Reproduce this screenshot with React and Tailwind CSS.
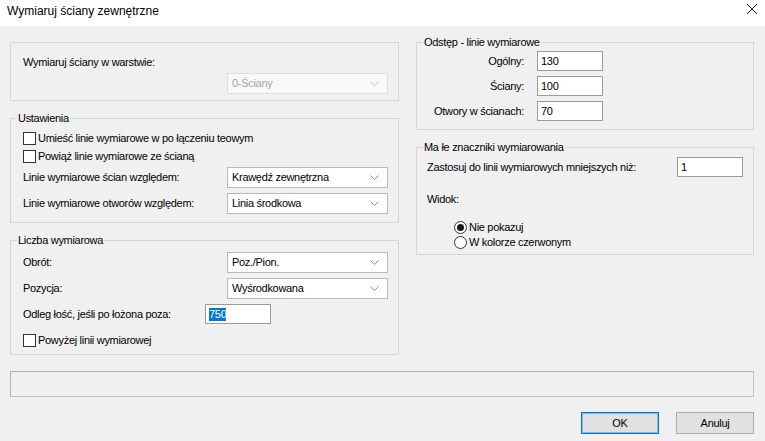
import React from 'react';

const font = { fontFamily: '"Liberation Sans", Arial, sans-serif' };

// chevron used in every combo box
const Chevron = ({ disabled }) => (
  <svg width="9" height="5" viewBox="0 0 9 5" className="shrink-0">
    <path d="M0.5 0.5 L4.5 4.5 L8.5 0.5" fill="none" stroke={disabled ? '#c4c4c4' : '#8a8a8a'} strokeWidth="1" />
  </svg>
);

const Combo = ({ value, disabled }) => (
  <div
    className={
      'w-[161px] h-[21px] flex items-center justify-between pl-[4px] pr-[8px] border ' +
      (disabled ? 'bg-[#f9f9f9] border-[#dedede] text-[#a3a3a3]' : 'bg-white border-[#b9b9b9] text-black')
    }
  >
    <span>{value}</span>
    <Chevron disabled={disabled} />
  </div>
);

const Input = ({ value, selected }) => (
  <div className="w-[66px] h-[20px] bg-white border border-[#9c9c9c] flex items-center pl-[3px]">
    {selected ? <span className="bg-[#0078d7] text-white leading-[13px]">{value}</span> : <span>{value}</span>}
  </div>
);

const Check = ({ label }) => (
  <div className="h-[15px] flex items-center">
    <div className="w-[13px] h-[13px] bg-white border border-[#333]" />
    <span className="ml-[2px]">{label}</span>
  </div>
);

const Radio = ({ label, checked }) => (
  <div className="h-[15px] flex items-center">
    <div className="w-[13px] h-[13px] rounded-full bg-white border border-[#333] flex items-center justify-center">
      {checked && <div className="w-[7px] h-[7px] rounded-full bg-[#1a1a1a]" />}
    </div>
    <span className="ml-[2px]">{label}</span>
  </div>
);

const Group = ({ title, className, children }) => (
  <div className={'relative border border-[#d5d5d5] ' + className}>
    {title && (
      <span className="absolute -top-[7px] left-[6px] px-[1px] bg-[#f0f0f0] leading-[13px]">{title}</span>
    )}
    {children}
  </div>
);

export default function App() {
  return (
    <div className="w-[765px] h-[441px] bg-[#f0f0f0] text-[11px] tracking-[-0.3px] text-black overflow-hidden" style={font}>
      {/* title bar */}
      <div className="h-[26px] bg-white flex items-center justify-between pl-[7px] pr-[7px]">
        <span className="text-[12px] tracking-normal leading-[16px] -mt-[5px]">Wymiaruj ściany zewnętrzne</span>
        <svg width="12" height="12" viewBox="0 0 12 12" className="-mt-[8px]">
          <path d="M1 1 L11 11 M11 1 L1 11" stroke="#222" strokeWidth="1" />
        </svg>
      </div>

      <div className="pl-[10px] pr-[11px] pt-[16px]">
        <div className="flex gap-[17px]">
          {/* left column */}
          <div className="w-[389px] flex flex-col">
            <Group className="h-[59px] pl-[12px] pt-[13px]">
              <div className="leading-[13px]">Wymiaruj ściany w warstwie:</div>
              <div className="mt-[4px] ml-[204px]">
                <Combo value="0-Ściany" disabled />
              </div>
            </Group>

            <Group title="Ustawienia" className="mt-[17px] h-[105px] pl-[12px] pt-[12px]">
              <Check label="Umieść linie wymiarowe w po łączeniu teowym" />
              <div className="mt-[3px]">
                <Check label="Powiąż linie wymiarowe ze ścianą" />
              </div>
              <div className="mt-[3px] flex items-center">
                <span className="w-[204px]">Linie wymiarowe ścian względem:</span>
                <Combo value="Krawędź zewnętrzna" />
              </div>
              <div className="mt-[5px] flex items-center">
                <span className="w-[204px]">Linie wymiarowe otworów względem:</span>
                <Combo value="Linia środkowa" />
              </div>
            </Group>

            <Group title="Liczba wymiarowa" className="mt-[17px] h-[115px] pl-[12px] pt-[11px]">
              <div className="flex items-center">
                <span className="w-[204px]">Obrót:</span>
                <Combo value="Poz./Pion." />
              </div>
              <div className="mt-[5px] flex items-center">
                <span className="w-[204px]">Pozycja:</span>
                <Combo value="Wyśrodkowana" />
              </div>
              <div className="mt-[5px] flex items-center">
                <span className="w-[182px]">Odleg łość, jeśli po łożona poza:</span>
                <Input value="750" selected />
              </div>
              <div className="mt-[9px]">
                <Check label="Powyżej linii wymiarowej" />
              </div>
            </Group>
          </div>

          {/* right column */}
          <div className="w-[338px] flex flex-col">
            <Group title="Odstęp - linie wymiarowe" className="h-[88px] pt-[8px] flex flex-col gap-[5px]">
              {[
                ['Ogólny:', '130'],
                ['Ściany:', '100'],
                ['Otwory w ścianach:', '70'],
              ].map(([label, value]) => (
                <div key={label} className="flex items-center">
                  <span className="w-[107px] text-right">{label}</span>
                  <div className="ml-[13px]">
                    <Input value={value} />
                  </div>
                </div>
              ))}
            </Group>

            <Group title="Ma łe znaczniki wymiarowania" className="mt-[17px] h-[108px] pt-[9px] pl-[10px] pr-[10px]">
              <div className="flex items-center justify-between">
                <span>Zastosuj do linii wymiarowych mniejszych niż:</span>
                <Input value="1" />
              </div>
              <div className="mt-[16px] leading-[13px]">Widok:</div>
              <div className="mt-[14px] pl-[27px]">
                <Radio label="Nie pokazuj" checked />
                <Radio label="W kolorze czerwonym" />
              </div>
            </Group>
          </div>
        </div>

        {/* status box */}
        <div className="mt-[16px] h-[26px] border border-[#c4c4c4] border-t-[#b4b4b4] border-l-[#b4b4b4]" />

        {/* buttons */}
        <div className="mt-[15px] flex justify-end gap-[17px]">
          <button className="w-[78px] h-[22px] bg-[#e1e1e1] border border-[#0078d7] outline outline-1 -outline-offset-2 outline-[#0078d7]/40 text-[11px]">
            OK
          </button>
          <button className="w-[78px] h-[22px] bg-[#e1e1e1] border border-[#adadad] text-[11px]">Anuluj</button>
        </div>
      </div>
    </div>
  );
}
